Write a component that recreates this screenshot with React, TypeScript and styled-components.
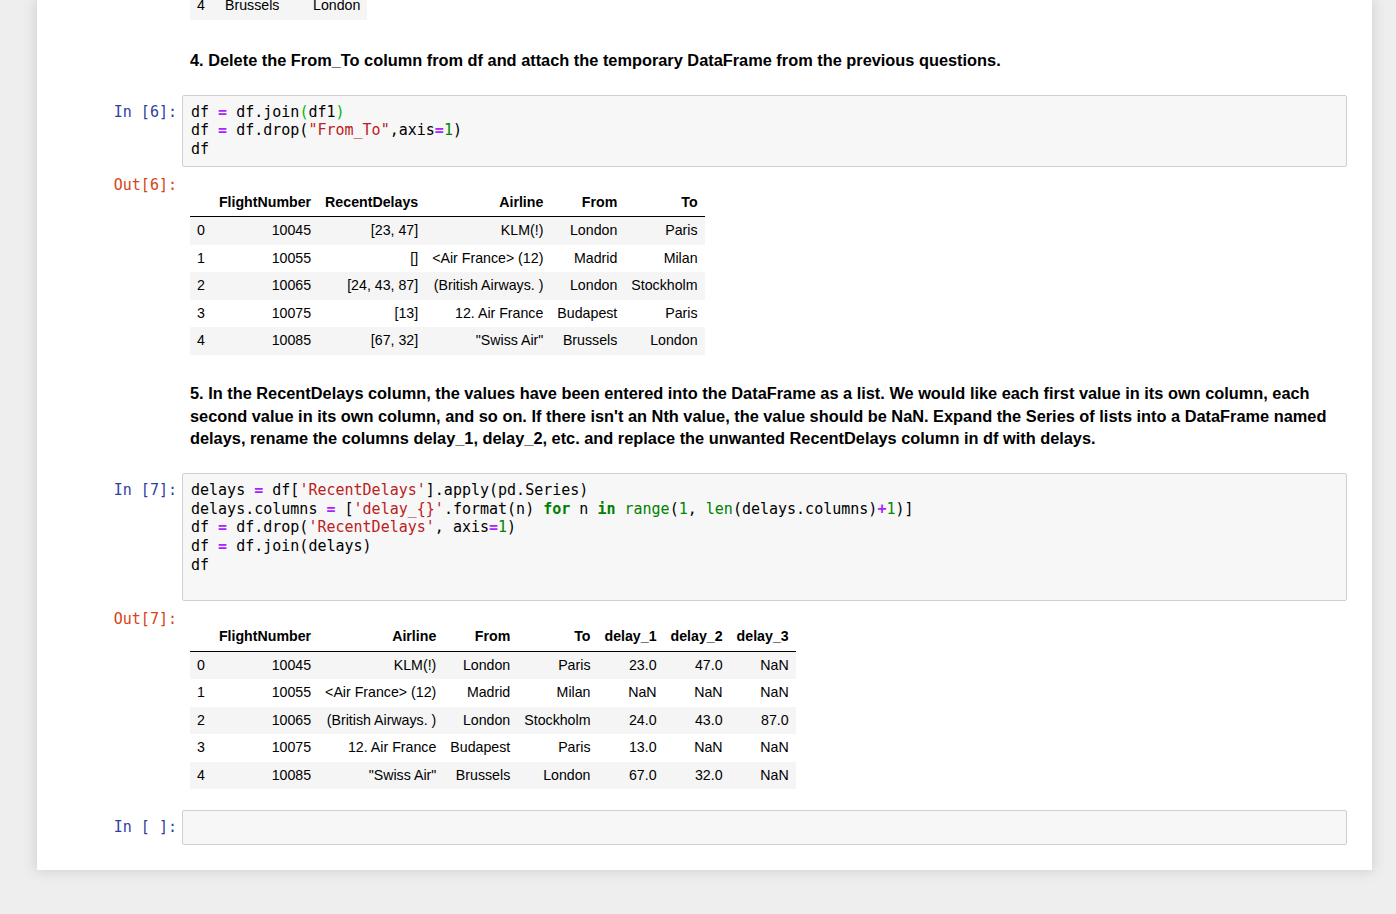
import React from "react";
import styled, { createGlobalStyle } from "styled-components";

const Global = createGlobalStyle`
  html, body { margin: 0; padding: 0; background: #eeeeee; }
  body { font-family: "Liberation Sans", Arial, sans-serif; color: #000; overflow: hidden; }
`;

const Page = styled.div`
  height: 914px;
  overflow: hidden;
`;

const Panel = styled.div`
  margin-left: 37px;
  width: 1335px;
  background: #fff;
  box-shadow: 0 0 12px 1px rgba(87, 87, 87, 0.2);
  padding: 0 25px 25px 0;
  box-sizing: border-box;
  display: flex;
  flex-direction: column;
`;

const Row = styled.div<{ $top?: number; $bottom?: number }>`
  display: flex;
  align-items: flex-start;
  padding-top: ${(p) => p.$top ?? 0}px;
  padding-bottom: ${(p) => p.$bottom ?? 0}px;
`;

const Prompt = styled.div<{ $out?: boolean; $top?: number }>`
  width: 145px;
  flex: none;
  box-sizing: border-box;
  padding-right: 5px;
  padding-top: ${(p) => p.$top ?? 0}px;
  text-align: right;
  font-family: "DejaVu Sans Mono", monospace;
  font-size: 15px;
  line-height: 18.75px;
  color: ${(p) => (p.$out ? "#D84315" : "#303F9F")};
  white-space: pre;
`;

const InputBox = styled.div`
  flex: 1;
  min-width: 0;
  border: 1px solid #cfcfcf;
  border-radius: 2px;
  background: #f7f7f7;
  padding: 6.5px 8px 7px;
`;

const Code = styled.pre`
  margin: 0;
  font-family: "DejaVu Sans Mono", monospace;
  font-size: 15px;
  line-height: 18.75px;
  color: #000;
  white-space: pre;
  min-height: 18.75px;
`;

const Op = styled.span`
  color: #aa22ff;
  font-weight: bold;
`;
const Kw = styled.span`
  color: #008000;
  font-weight: bold;
`;
const Num = styled.span`
  color: #008800;
`;
const Str = styled.span`
  color: #ba2121;
`;
const Bi = styled.span`
  color: #008000;
`;
const Br = styled.span`
  color: #00bb00;
`;

const MdBody = styled.div`
  flex: 1;
  padding-left: 8px;
  padding-right: 8px;
  font-family: "Liberation Sans", Arial, sans-serif;
  font-size: 16.35px;
  font-weight: bold;
  line-height: 22.5px;
  color: #000;
`;

const OutBody = styled.div<{ $top?: number }>`
  flex: 1;
  padding-left: 8px;
  padding-top: ${(p) => p.$top ?? 0}px;
`;

const StubClip = styled.div`
  height: 19.5px;
  overflow: hidden;
  display: flex;
  flex-direction: column;
  justify-content: flex-end;
  align-items: flex-start;
`;

const Table = styled.table`
  border-collapse: collapse;
  border-spacing: 0;
  font-family: "Liberation Sans", Arial, sans-serif;
  font-size: 14.2px;
  color: #000;
`;

const THead = styled.thead`
  border-bottom: 1px solid #000;
  vertical-align: bottom;
`;

const TBody = styled.tbody`
  tr:nth-child(odd) {
    background: #f5f5f5;
  }
`;

const Th = styled.th`
  font-weight: bold;
  text-align: right;
  padding: 7px 7px;
  line-height: 13.5px;
  white-space: nowrap;
`;

const Td = styled.td<{ $w?: number }>`
  text-align: right;
  padding: 7px 7px;
  line-height: 13.5px;
  white-space: nowrap;
  width: ${(p) => (p.$w ? `${p.$w - 14}px` : "auto")};
`;

const Idx = styled.td<{ $w?: number }>`
  text-align: left;
  padding: 7px 7px;
  line-height: 13.5px;
  width: ${(p) => (p.$w ? `${p.$w - 14}px` : "auto")};
`;

const table1 = {
  cols: ["FlightNumber", "RecentDelays", "Airline", "From", "To"],
  rows: [
    ["10045", "[23, 47]", "KLM(!)", "London", "Paris"],
    ["10055", "[]", "<Air France> (12)", "Madrid", "Milan"],
    ["10065", "[24, 43, 87]", "(British Airways. )", "London", "Stockholm"],
    ["10075", "[13]", "12. Air France", "Budapest", "Paris"],
    ["10085", "[67, 32]", '"Swiss Air"', "Brussels", "London"],
  ],
};

const table2 = {
  cols: ["FlightNumber", "Airline", "From", "To", "delay_1", "delay_2", "delay_3"],
  rows: [
    ["10045", "KLM(!)", "London", "Paris", "23.0", "47.0", "NaN"],
    ["10055", "<Air France> (12)", "Madrid", "Milan", "NaN", "NaN", "NaN"],
    ["10065", "(British Airways. )", "London", "Stockholm", "24.0", "43.0", "87.0"],
    ["10075", "12. Air France", "Budapest", "Paris", "13.0", "NaN", "NaN"],
    ["10085", '"Swiss Air"', "Brussels", "London", "67.0", "32.0", "NaN"],
  ],
};

function DataFrame({ data }: { data: { cols: string[]; rows: string[][] } }) {
  return (
    <Table>
      <THead>
        <tr>
          <Th />
          {data.cols.map((c) => (
            <Th key={c}>{c}</Th>
          ))}
        </tr>
      </THead>
      <TBody>
        {data.rows.map((r, i) => (
          <tr key={i}>
            <Idx>{i}</Idx>
            {r.map((v, j) => (
              <Td key={j}>{v}</Td>
            ))}
          </tr>
        ))}
      </TBody>
    </Table>
  );
}

export default function App() {
  return (
    <Page>
      <Global />
      <Panel>
        <Row $bottom={23}>
          <Prompt />
          <OutBody>
            <StubClip>
              <Table>
                <TBody>
                  <tr>
                    <Idx $w={28}>4</Idx>
                    <Td $w={67}>Brussels</Td>
                    <Td $w={81}>London</Td>
                  </tr>
                </TBody>
              </Table>
            </StubClip>
          </OutBody>
        </Row>

        <Row $top={6.5} $bottom={23.5}>
          <Prompt />
          <MdBody>
            4. Delete the From_To column from df and attach the temporary DataFrame from the previous
            questions.
          </MdBody>
        </Row>

        <Row>
          <Prompt $top={7.5}>In [6]:</Prompt>
          <InputBox>
            <Code>
              df <Op>=</Op> df.join<Br>(</Br>df1<Br>)</Br>
              {"\n"}df <Op>=</Op> df.drop(<Str>"From_To"</Str>,axis<Op>=</Op>
              <Num>1</Num>){"\n"}df
            </Code>
          </InputBox>
        </Row>

        <Row $top={9} $bottom={21}>
          <Prompt $out>Out[6]:</Prompt>
          <OutBody $top={13}>
            <DataFrame data={table1} />
          </OutBody>
        </Row>

        <Row $top={6.5} $bottom={23.5}>
          <Prompt />
          <MdBody>
            5. In the RecentDelays column, the values have been entered into the DataFrame as a list. We
            would like each first value in its own column, each second value in its own column, and so
            on. If there isn't an Nth value, the value should be NaN. Expand the Series of lists into a
            DataFrame named delays, rename the columns delay_1, delay_2, etc. and replace the unwanted
            RecentDelays column in df with delays.
          </MdBody>
        </Row>

        <Row>
          <Prompt $top={7.5}>In [7]:</Prompt>
          <InputBox>
            <Code>
              delays <Op>=</Op> df[<Str>'RecentDelays'</Str>].apply(pd.Series){"\n"}
              delays.columns <Op>=</Op> [<Str>'delay_{"{}"}'</Str>.format(n) <Kw>for</Kw> n{" "}
              <Kw>in</Kw> <Bi>range</Bi>(<Num>1</Num>, <Bi>len</Bi>(delays.columns)<Op>+</Op>
              <Num>1</Num>)]{"\n"}
              df <Op>=</Op> df.drop(<Str>'RecentDelays'</Str>, axis<Op>=</Op>
              <Num>1</Num>){"\n"}
              df <Op>=</Op> df.join(delays){"\n"}
              df{"\n"}
              {" "}
            </Code>
          </InputBox>
        </Row>

        <Row $top={9} $bottom={21}>
          <Prompt $out>Out[7]:</Prompt>
          <OutBody $top={13}>
            <DataFrame data={table2} />
          </OutBody>
        </Row>

        <Row>
          <Prompt $top={7.5}>In [ ]:</Prompt>
          <InputBox>
            <Code> </Code>
          </InputBox>
        </Row>
      </Panel>
    </Page>
  );
}
